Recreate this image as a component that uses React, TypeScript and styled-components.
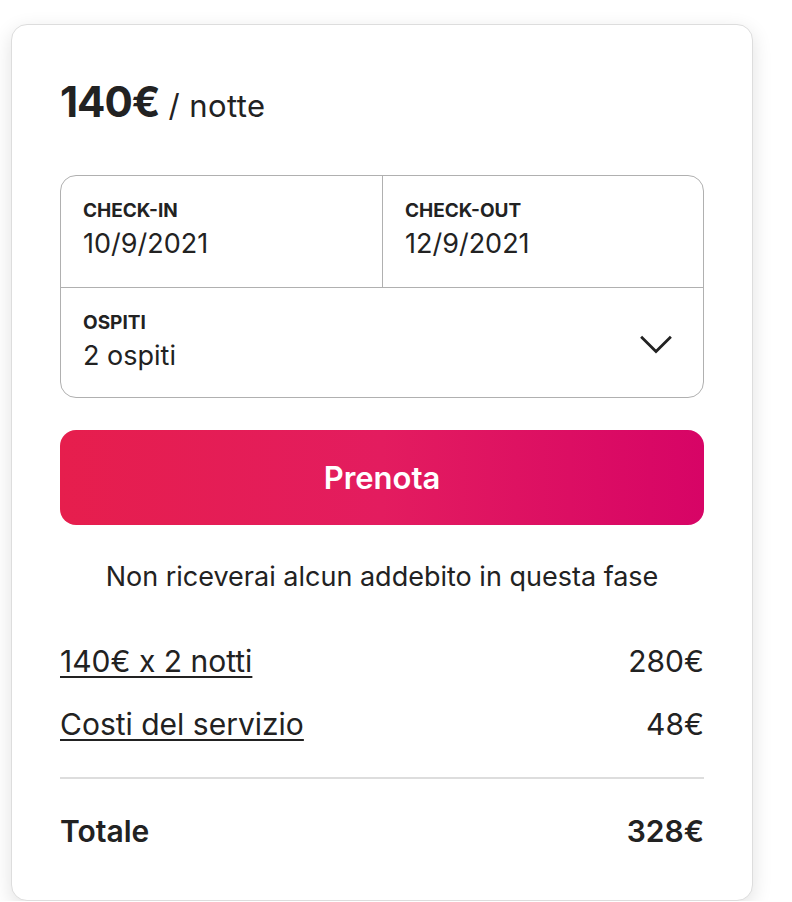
import styled, { createGlobalStyle } from 'styled-components';

const GlobalStyle = createGlobalStyle`
  body {
    margin: 0;
    background: #ffffff;
    font-family: 'Inter', 'Liberation Sans', sans-serif;
    color: #222222;
  }
`;

const Page = styled.div`
  padding: 24px 0 0 11px;
`;

const Card = styled.div`
  box-sizing: border-box;
  width: 742px;
  height: 877px;
  padding: 51px 48px 0 48px;
  border: 1px solid #dddddd;
  border-radius: 16px;
  background: #ffffff;
  box-shadow: 0 6px 20px rgba(0, 0, 0, 0.12);
`;

const PriceLine = styled.div`
  display: flex;
  align-items: baseline;
  gap: 9px;
  height: 48px;
`;

const Price = styled.span`
  font-size: 42px;
  font-weight: 700;
  letter-spacing: -1px;
`;

const PerNight = styled.span`
  font-size: 31px;
  font-weight: 400;
  letter-spacing: 0.4px;
`;

const Picker = styled.div`
  margin-top: 51px;
  border: 1px solid #b0b0b0;
  border-radius: 16px;
  display: grid;
  grid-template-columns: 1fr 1fr;
`;

const Cell = styled.div<{ $full?: boolean; $right?: boolean }>`
  box-sizing: border-box;
  height: ${(p) => (p.$full ? '110px' : '111px')};
  padding: 23px 22px 0 22px;
  grid-column: ${(p) => (p.$full ? '1 / 3' : 'auto')};
  border-left: ${(p) => (p.$right ? '1px solid #b0b0b0' : 'none')};
  border-top: ${(p) => (p.$full ? '1px solid #b0b0b0' : 'none')};
  display: flex;
  align-items: flex-start;
  justify-content: space-between;
`;

const Label = styled.div`
  font-size: 19px;
  font-weight: 700;
  text-transform: uppercase;
  line-height: 24px;
`;

const Value = styled.div`
  font-size: 27px;
  line-height: 36px;
  margin-top: 3px;
`;

const Chevron = styled.svg`
  width: 34px;
  height: 34px;
  margin-top: 14px;
  margin-right: 8px;
`;

const BookButton = styled.button`
  display: block;
  width: 100%;
  height: 95px;
  margin-top: 32px;
  border: none;
  border-radius: 16px;
  background: linear-gradient(to right, #e61e4d 0%, #e31c5f 50%, #d70466 100%);
  color: #ffffff;
  font-family: 'Inter', 'Liberation Sans', sans-serif;
  font-size: 31px;
  font-weight: 600;
`;

const Note = styled.div`
  margin-top: 36px;
  text-align: center;
  font-size: 27px;
  line-height: 32px;
`;

const Row = styled.div<{ $bold?: boolean }>`
  display: flex;
  justify-content: space-between;
  font-size: 30px;
  font-weight: ${(p) => (p.$bold ? 600 : 400)};
  line-height: 40px;
`;

const Rows = styled.div`
  margin-top: 48px;
  display: flex;
  flex-direction: column;
  gap: 23px;
`;

const Link = styled.span`
  text-decoration: underline;
  text-underline-offset: 4px;
  text-decoration-thickness: 2px;
`;

const Divider = styled.div`
  height: 2px;
  background: #dddddd;
  margin: 33px 0 32px 0;
`;

export default function App() {
  return (
    <Page>
      <GlobalStyle />
      <Card>
        <PriceLine>
          <Price>140€</Price>
          <PerNight>/ notte</PerNight>
        </PriceLine>

        <Picker>
          <Cell>
            <div>
              <Label>Check-in</Label>
              <Value>10/9/2021</Value>
            </div>
          </Cell>
          <Cell $right>
            <div>
              <Label>Check-out</Label>
              <Value>12/9/2021</Value>
            </div>
          </Cell>
          <Cell $full>
            <div>
              <Label>Ospiti</Label>
              <Value>2 ospiti</Value>
            </div>
            <Chevron viewBox="0 0 32 32" fill="none" stroke="#222222" strokeWidth="2.6">
              <path d="M2 11 L16 25 L30 11" />
            </Chevron>
          </Cell>
        </Picker>

        <BookButton>Prenota</BookButton>

        <Note>Non riceverai alcun addebito in questa fase</Note>

        <Rows>
          <Row>
            <Link>140€ x 2 notti</Link>
            <span>280€</span>
          </Row>
          <Row>
            <Link>Costi del servizio</Link>
            <span>48€</span>
          </Row>
        </Rows>
        <Divider />
        <Row $bold>
          <span>Totale</span>
          <span>328€</span>
        </Row>
      </Card>
    </Page>
  );
}
